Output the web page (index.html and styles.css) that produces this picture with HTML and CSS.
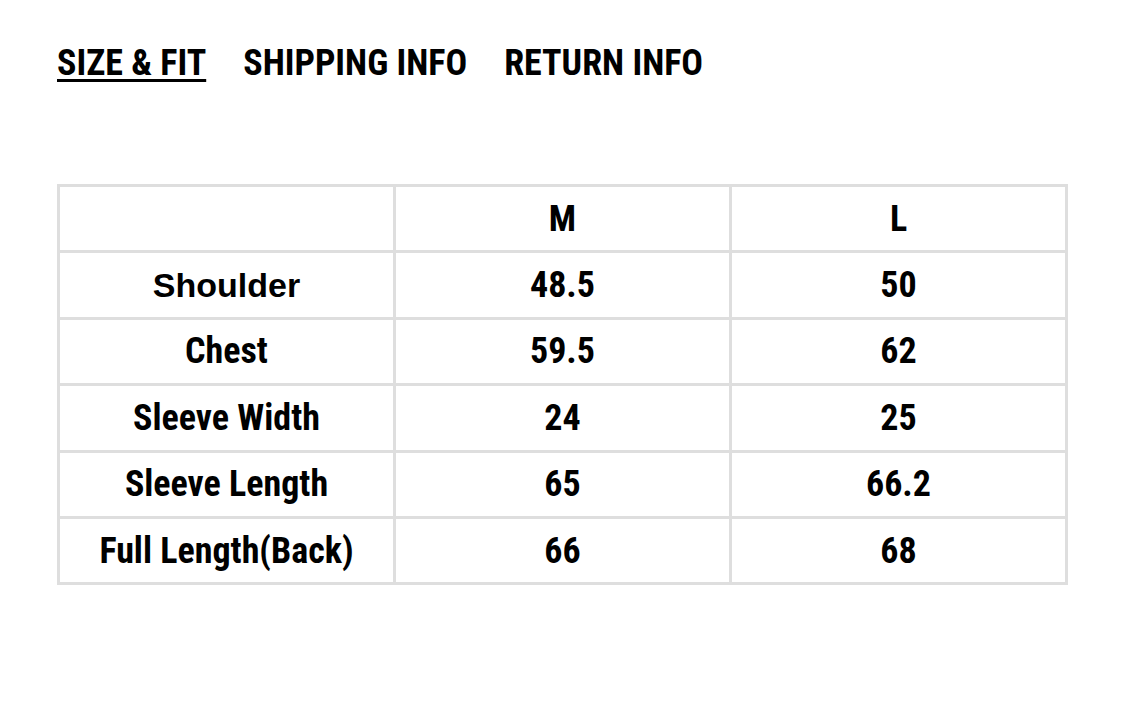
FILE: index.html
```html
<!DOCTYPE html>
<html>
<head>
<meta charset="utf-8">
<link rel="stylesheet" href="styles.css">
</head>
<body>
<div class="page">
  <nav class="tabs">
    <span class="tab active">SIZE &amp; FIT</span>
    <span class="tab">SHIPPING INFO</span>
    <span class="tab">RETURN INFO</span>
  </nav>
  <table class="size-table">
    <tr><td></td><td>M</td><td>L</td></tr>
    <tr><td class="label arial">Shoulder</td><td>48.5</td><td>50</td></tr>
    <tr><td class="label">Chest</td><td>59.5</td><td>62</td></tr>
    <tr><td class="label">Sleeve Width</td><td>24</td><td>25</td></tr>
    <tr><td class="label">Sleeve Length</td><td>65</td><td>66.2</td></tr>
    <tr><td class="label">Full Length(Back)</td><td>66</td><td>68</td></tr>
  </table>
</div>
</body>
</html>
```

FILE: styles.css
```css
html, body {
  margin: 0;
  padding: 0;
  background: #fff;
}
.page {
  padding: 41px 57px 0 57px;
  font-family: Roboto, "Liberation Sans", sans-serif;
  font-stretch: 75%;
  color: #000;
}
.tabs {
  display: flex;
  gap: 37px;
  height: 48px;
  align-items: flex-start;
}
.tab {
  font-size: 36px;
  font-weight: 700;
  line-height: 44px;
  letter-spacing: 0;
}
.tab.active {
  text-decoration: underline;
  text-decoration-thickness: 3px;
  text-underline-offset: 4px;
}
.size-table {
  margin-top: 95px;
  width: 1011px;
  border-collapse: collapse;
  table-layout: fixed;
}
.size-table td {
  border: 3px solid #dedede;
  height: 63.4px;
  padding: 0;
  text-align: center;
  font-size: 36px;
  font-weight: 700;
}
.size-table .arial {
  font-family: "Liberation Sans", Arial, sans-serif;
  font-stretch: normal;
  font-size: 34px;
}
```
